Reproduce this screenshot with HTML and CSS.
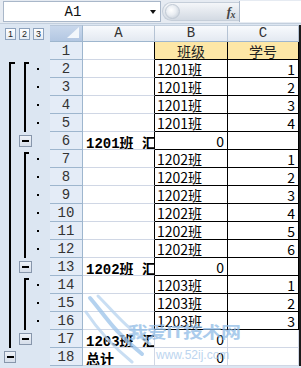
FILE: index.html
```html
<!DOCTYPE html>
<html>
<head>
<meta charset="utf-8">
<link rel="stylesheet" href="styles.css">
</head>
<body>
<div class="app">
  <div class="fbar">
    <div class="namebox"><span class="nb-text">A1</span><span class="nb-arrow"></span></div>
    <div class="fx-area"><span class="knob"></span><span class="fx">f<span class="fx-x">x</span></span></div>
    <div class="finput"></div>
  </div>

  <div class="sheet">
    <!-- header row -->
    <div class="ol ol-head"><span class="lvl">1</span><span class="lvl">2</span><span class="lvl">3</span></div>
    <div class="corner"></div>
    <div class="ch">A</div>
    <div class="ch">B</div>
    <div class="ch">C</div>
    <div class="edge"></div>

    <!-- row 1 -->
    <div class="ol"></div>
    <div class="rh">1</div>
    <div class="c a bk"></div>
    <div class="c bx hdr">班级</div>
    <div class="c bx hdr">学号</div>
    <div class="edge"></div>

    <!-- row 2 -->
    <div class="ol"><span class="s1"><i class="ln top1"></i></span><span class="s2"><i class="ln top2"></i></span><span class="s3"><i class="dot"></i></span></div>
    <div class="rh">2</div>
    <div class="c a bk"></div>
    <div class="c bx">1201班</div>
    <div class="c bx num">1</div>
    <div class="edge"></div>

    <!-- row 3 -->
    <div class="ol"><span class="s1"><i class="ln"></i></span><span class="s2"><i class="ln"></i></span><span class="s3"><i class="dot"></i></span></div>
    <div class="rh">3</div>
    <div class="c a bk"></div>
    <div class="c bx">1201班</div>
    <div class="c bx num">2</div>
    <div class="edge"></div>

    <!-- row 4 -->
    <div class="ol"><span class="s1"><i class="ln"></i></span><span class="s2"><i class="ln"></i></span><span class="s3"><i class="dot"></i></span></div>
    <div class="rh">4</div>
    <div class="c a bk"></div>
    <div class="c bx">1201班</div>
    <div class="c bx num">3</div>
    <div class="edge"></div>

    <!-- row 5 -->
    <div class="ol"><span class="s1"><i class="ln"></i></span><span class="s2"><i class="ln"></i></span><span class="s3"><i class="dot"></i></span></div>
    <div class="rh">5</div>
    <div class="c a bk"></div>
    <div class="c bx">1201班</div>
    <div class="c bx num">4</div>
    <div class="edge"></div>

    <!-- row 6 -->
    <div class="ol"><span class="s1"><i class="ln"></i></span><span class="s2"><i class="minus m2"></i></span><span class="s3"></span></div>
    <div class="rh">6</div>
    <div class="c a bk bold">1201班 汇总</div>
    <div class="c bx num">0</div>
    <div class="c bx"></div>
    <div class="edge"></div>

    <!-- row 7 -->
    <div class="ol"><span class="s1"><i class="ln"></i></span><span class="s2"><i class="ln top2"></i></span><span class="s3"><i class="dot"></i></span></div>
    <div class="rh">7</div>
    <div class="c a bk"></div>
    <div class="c bx">1202班</div>
    <div class="c bx num">1</div>
    <div class="edge"></div>

    <!-- row 8 -->
    <div class="ol"><span class="s1"><i class="ln"></i></span><span class="s2"><i class="ln"></i></span><span class="s3"><i class="dot"></i></span></div>
    <div class="rh">8</div>
    <div class="c a bk"></div>
    <div class="c bx">1202班</div>
    <div class="c bx num">2</div>
    <div class="edge"></div>

    <!-- row 9 -->
    <div class="ol"><span class="s1"><i class="ln"></i></span><span class="s2"><i class="ln"></i></span><span class="s3"><i class="dot"></i></span></div>
    <div class="rh">9</div>
    <div class="c a bk"></div>
    <div class="c bx">1202班</div>
    <div class="c bx num">3</div>
    <div class="edge"></div>

    <!-- row 10 -->
    <div class="ol"><span class="s1"><i class="ln"></i></span><span class="s2"><i class="ln"></i></span><span class="s3"><i class="dot"></i></span></div>
    <div class="rh">10</div>
    <div class="c a bk"></div>
    <div class="c bx">1202班</div>
    <div class="c bx num">4</div>
    <div class="edge"></div>

    <!-- row 11 -->
    <div class="ol"><span class="s1"><i class="ln"></i></span><span class="s2"><i class="ln"></i></span><span class="s3"><i class="dot"></i></span></div>
    <div class="rh">11</div>
    <div class="c a bk"></div>
    <div class="c bx">1202班</div>
    <div class="c bx num">5</div>
    <div class="edge"></div>

    <!-- row 12 -->
    <div class="ol"><span class="s1"><i class="ln"></i></span><span class="s2"><i class="ln"></i></span><span class="s3"><i class="dot"></i></span></div>
    <div class="rh">12</div>
    <div class="c a bk"></div>
    <div class="c bx">1202班</div>
    <div class="c bx num">6</div>
    <div class="edge"></div>

    <!-- row 13 -->
    <div class="ol"><span class="s1"><i class="ln"></i></span><span class="s2"><i class="minus m2"></i></span><span class="s3"></span></div>
    <div class="rh">13</div>
    <div class="c a bk bold">1202班 汇总</div>
    <div class="c bx num">0</div>
    <div class="c bx"></div>
    <div class="edge"></div>

    <!-- row 14 -->
    <div class="ol"><span class="s1"><i class="ln"></i></span><span class="s2"><i class="ln top2"></i></span><span class="s3"><i class="dot"></i></span></div>
    <div class="rh">14</div>
    <div class="c a bk"></div>
    <div class="c bx">1203班</div>
    <div class="c bx num">1</div>
    <div class="edge"></div>

    <!-- row 15 -->
    <div class="ol"><span class="s1"><i class="ln"></i></span><span class="s2"><i class="ln"></i></span><span class="s3"><i class="dot"></i></span></div>
    <div class="rh">15</div>
    <div class="c a bk"></div>
    <div class="c bx">1203班</div>
    <div class="c bx num">2</div>
    <div class="edge"></div>

    <!-- row 16 -->
    <div class="ol"><span class="s1"><i class="ln"></i></span><span class="s2"><i class="ln"></i></span><span class="s3"><i class="dot"></i></span></div>
    <div class="rh">16</div>
    <div class="c a bk"></div>
    <div class="c bx">1203班</div>
    <div class="c bx num">3</div>
    <div class="edge"></div>

    <!-- row 17 -->
    <div class="ol"><span class="s1"><i class="ln"></i></span><span class="s2"><i class="minus m2"></i></span><span class="s3"></span></div>
    <div class="rh">17</div>
    <div class="c a bold">1203班 汇总</div>
    <div class="c num">0</div>
    <div class="c"></div>
    <div class="edge"></div>

    <!-- row 18 -->
    <div class="ol"><span class="s1"><i class="minus m1"></i></span><span class="s2"></span><span class="s3"></span></div>
    <div class="rh">18</div>
    <div class="c a bold">总计</div>
    <div class="c num">0</div>
    <div class="c"></div>
    <div class="edge"></div>
  </div>

  <div class="watermark">
    <svg class="wing" width="80" height="80" viewBox="0 0 80 80">
      <path d="M6 6 C 20 22, 30 40, 58 62" fill="none" stroke="#9cc3ea" stroke-width="4" stroke-linecap="round"/>
      <path d="M14 4 C 30 20, 40 34, 66 52" fill="none" stroke="#b7d4f0" stroke-width="3" stroke-linecap="round"/>
      <path d="M2 20 C 14 38, 26 52, 48 70" fill="none" stroke="#b7d4f0" stroke-width="3" stroke-linecap="round"/>
    </svg>
    <div class="wm-title">我爱IT技术网</div>
    <div class="wm-url">www.52ij.com</div>
  </div>
</div>
</body>
</html>
```

FILE: styles.css
```css
* { box-sizing: border-box; }
html, body { margin: 0; padding: 0; }
body {
  width: 301px;
  height: 368px;
  overflow: hidden;
  background: #dce6f2;
}
.app {
  position: relative;
  width: 301px;
  height: 368px;
  background: #dce6f2;
}

/* formula bar */
.fbar {
  display: flex;
  height: 24px;
  background: #e6ebf2;
  border-bottom: 1px solid #c3cfdd;
}
.namebox {
  display: flex;
  align-items: center;
  width: 158px;
  margin: 1px 0 1px 3px;
  background: #fff;
  border: 1px solid #a9b7c9;
}
.nb-text {
  flex: 0 0 138px;
  text-align: center;
  font: 14px "Liberation Mono", monospace;
  color: #111;
}
.nb-arrow {
  margin-left: 8px;
  width: 0;
  height: 0;
  border-left: 3.5px solid transparent;
  border-right: 3.5px solid transparent;
  border-top: 4px solid #111;
}
.fx-area {
  display: flex;
  align-items: center;
  justify-content: space-between;
  width: 77px;
  margin: 2px 0 2px 1px;
  padding: 0 4px 0 2px;
  border-radius: 10px 0 0 10px;
  background: linear-gradient(#f4f6f9, #d3dae3);
  border: 1px solid #c5ced9;
  border-right: none;
}
.knob {
  width: 15px;
  height: 15px;
  border-radius: 50%;
  background: radial-gradient(circle at 40% 40%, #ffffff 0, #e9edf2 45%, #b9c3cf 100%);
  border: 1px solid #c0c9d4;
}
.fx {
  font: italic bold 13px "Liberation Serif", serif;
  color: #444;
  letter-spacing: -0.5px;
}
.fx-x { font-size: 10px; position: relative; top: 2px; }
.finput {
  flex: 1;
  margin: 1px 0;
  background: #fff;
  border-left: 1px solid #a9b7c9;
}

/* sheet grid */
.sheet {
  display: grid;
  grid-template-columns: 50px 33px 72px 73px 71px 2px;
  grid-template-rows: 17px;
  grid-auto-rows: 18px;
  margin-top: 1px;
}
.ol {
  display: grid;
  grid-template-columns: 17px 16px 17px;
  background: #dce6f2;
}
.ol-head {
  display: flex;
  align-items: center;
  gap: 3px;
  padding-left: 5px;
}
.lvl {
  width: 11px;
  height: 12px;
  border: 1px solid #8da2bd;
  background: linear-gradient(#ffffff, #e6ecf4);
  font: 9px "Liberation Sans", sans-serif;
  color: #222;
  text-align: center;
  line-height: 10px;
}
.s1, .s2, .s3 { display: flex; height: 18px; }
.s3 { align-items: center; }
.ln {
  display: block;
  width: 4px;
  height: 18px;
  border-left: 2px solid #000;
}
.s1 .ln { margin-left: 9px; }
.s2 .ln { margin-left: 7px; }
.ln.top1, .ln.top2 {
  margin-top: 2px;
  height: 16px;
  border-top: 2px solid #000;
  width: 6px;
}
.ln.top2 { width: 5px; }
.dot {
  display: block;
  width: 2px;
  height: 2px;
  margin-left: 4px;
  background: #000;
}
.minus {
  display: flex;
  align-items: center;
  justify-content: center;
  width: 13px;
  height: 12px;
  margin-top: 3px;
  border: 1px solid #8796ab;
  background: linear-gradient(#eef2f8, #d6deea);
}
.minus::before {
  content: "";
  width: 7px;
  height: 2px;
  background: #000;
}
.m1 { margin-left: 4px; width: 12px; }
.m2 { margin-left: 2px; }

.corner {
  position: relative;
  background: linear-gradient(#c9d8ec, #b3c7e2);
  border-right: 1px solid #9eb6ce;
  border-bottom: 1px solid #9eb6ce;
  border-top: 1px solid #b8c7da;
}
.corner::after {
  content: "";
  position: absolute;
  right: 3px;
  bottom: 3px;
  width: 12px;
  height: 11px;
  background: #f3f7fb;
  clip-path: polygon(100% 0, 100% 100%, 0 100%);
}
.ch {
  background: linear-gradient(#f8fafd, #e3e9f1);
  border-right: 1px solid #b5c3d4;
  border-bottom: 1px solid #9eb6ce;
  border-top: 1px solid #c3cfdd;
  font: 14px "Liberation Mono", monospace;
  color: #333;
  text-align: center;
  line-height: 15px;
}
.edge { background: #1b1b1b; }
.rh {
  background: #e4ecf7;
  border-right: 1px solid #9eb6ce;
  border-bottom: 1px solid #9eb6ce;
  font: 14px "Liberation Mono", monospace;
  color: #333;
  text-align: center;
  line-height: 18px;
}
.c {
  background: #fff;
  border-right: 1px solid #d0d7e5;
  border-bottom: 1px solid #d0d7e5;
  font: 14px "Noto Sans CJK SC", sans-serif;
  color: #000;
  line-height: 18px;
  padding: 0 2px;
  white-space: nowrap;
  overflow: hidden;
}
.c.bk { border-right-color: #000; }
.c.bx { border-right-color: #000; border-bottom-color: #000; }
.c.num { text-align: right; padding-right: 3px; }
.c.hdr {
  background: #fde7a6;
  color: #222;
  text-align: center;
}
.c.bold {
  font: bold 14px "Liberation Mono", "Noto Sans CJK SC", monospace;
  padding-left: 3px;
}

/* watermark */
.watermark {
  position: absolute;
  left: 84px;
  top: 290px;
  width: 190px;
  height: 78px;
  pointer-events: none;
  opacity: 0.75;
}
.wing { position: absolute; left: 0; top: 2px; }
.wm-title {
  position: absolute;
  left: 44px;
  top: 30px;
  font: bold 20px "Noto Sans CJK SC", sans-serif;
  color: #8fbbe6;
  letter-spacing: -1px;
  transform: scaleY(0.8);
  transform-origin: left top;
}
.wm-url {
  position: absolute;
  left: 72px;
  top: 58px;
  font: 12px "Liberation Sans", sans-serif;
  color: #a7c8ea;
}
```
